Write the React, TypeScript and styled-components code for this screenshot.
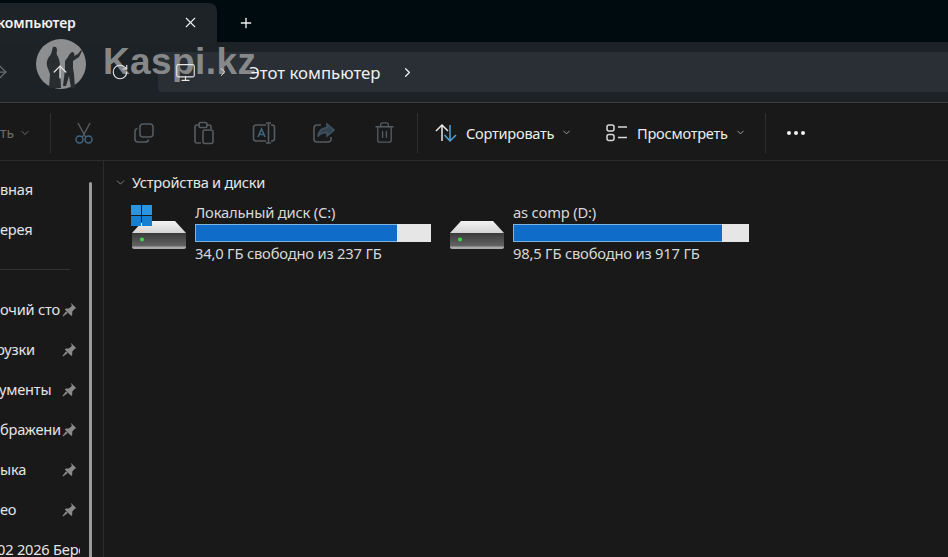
import React from 'react';
import styled, { createGlobalStyle } from 'styled-components';
import {
  ArrowRight,
  ArrowUp,
  ChevronDown,
  ChevronRight,
  Monitor,
  Plus,
  RotateCw,
  Trash2,
  X,
} from 'lucide-react';

const GlobalStyle = createGlobalStyle`
  html, body {
    margin: 0;
    padding: 0;
    background: #191919;
  }
  body {
    font-family: 'Noto Sans', 'Open Sans', sans-serif;
    color: #e8e8e8;
  }
`;

const Window = styled.div`
  position: relative;
  width: 948px;
  height: 557px;
  overflow: hidden;
  background: #191919;
`;

const TabBar = styled.div`
  height: 42px;
  display: flex;
  align-items: flex-end;
  background: #000b10;
`;

const Tab = styled.div`
  width: 217px;
  height: 39px;
  box-sizing: border-box;
  padding: 0 18px 0 0;
  display: flex;
  align-items: center;
  justify-content: space-between;
  background: #1e2327;
  border-top-right-radius: 8px;
  color: #f2f2f2;
  font-size: 14px;
  font-weight: 600;
`;

const TabTitle = styled.span`
  margin-left: -3px;
  letter-spacing: -0.1px;
`;

const NewTab = styled.div`
  margin-left: 21px;
  height: 39px;
  display: flex;
  align-items: center;
  color: #f0f0f0;
`;

const AddressRow = styled.div`
  height: 61px;
  box-sizing: border-box;
  padding: 10px 0;
  display: flex;
  align-items: stretch;
  background: #1d2226;
  border-bottom: 1px solid #3a3e42;
`;

const NavButtons = styled.div`
  width: 158px;
  flex: none;
  display: flex;
  align-items: center;
  gap: 36px;
  margin-left: -12px;
  margin-right: 12px;
  box-sizing: border-box;
`;

const NavIcon = styled.span<{ $dim?: boolean }>`
  position: relative;
  z-index: 2;
  width: 24px;
  height: 24px;
  display: flex;
  align-items: center;
  justify-content: center;
  color: ${(p) => (p.$dim ? '#6a6e72' : '#e6e6e6')};
`;

const AddressBar = styled.div`
  flex: 1;
  display: flex;
  align-items: center;
  padding-left: 15px;
  background: #2a2f35;
  border-radius: 4px 0 0 4px;
  color: #f0f0f0;
`;

const Crumb = styled.span`
  position: relative;
  z-index: 2;
  display: flex;
  align-items: center;
  font-size: 16.8px;
`;

const CrumbArrow = styled.span<{ $gap: number }>`
  position: relative;
  z-index: 2;
  display: flex;
  align-items: center;
  margin: 0 ${(p) => p.$gap}px;
`;

const Toolbar = styled.div`
  height: 58px;
  box-sizing: border-box;
  padding-top: 2px;
  display: flex;
  align-items: center;
  background: #191919;
  border-bottom: 1px solid #2c2c2c;
`;

const ClippedNew = styled.span`
  width: 50px;
  flex: none;
  display: flex;
  align-items: center;
  gap: 5px;
  color: #6c6c6c;
  font-size: 14px;
`;

const Separator = styled.span`
  width: 1px;
  height: 40px;
  flex: none;
  background: #2f2f2f;
`;

const ToolGroup = styled.div`
  display: flex;
  padding-left: 3px;
  width: 366px;
  flex: none;
  box-sizing: border-box;
`;

const ToolIcon = styled.span`
  width: 60px;
  height: 24px;
  flex: none;
  display: flex;
  align-items: center;
  justify-content: center;
  color: #565b5f;
`;

const ToolButton = styled.div<{ $width: number; $pad: number }>`
  width: ${(p) => p.$width}px;
  flex: none;
  box-sizing: border-box;
  padding-left: ${(p) => p.$pad}px;
  display: flex;
  align-items: center;
  color: #ececec;
  font-size: 14.6px;
  letter-spacing: -0.25px;
`;

const ToolLabel = styled.span`
  margin: 0 7px 0 9px;
`;

const Dots = styled.div`
  margin-left: 21px;
  display: flex;
  gap: 3px;
`;

const Dot = styled.span`
  width: 4px;
  height: 4px;
  border-radius: 50%;
  background: #f2f2f2;
`;

const Body = styled.div`
  display: flex;
  height: 396px;
`;

const Sidebar = styled.nav`
  position: relative;
  width: 104px;
  flex: none;
  box-sizing: border-box;
  padding-top: 8px;
  border-right: 1px solid #2a2a2a;
`;

const NavItem = styled.div`
  height: 40px;
  width: 77px;
  display: flex;
  align-items: center;
  justify-content: space-between;
  font-size: 14.6px;
  color: #e4e4e4;
  letter-spacing: -0.2px;
`;

const NavText = styled.span<{ $width: number; $indent?: number }>`
  width: ${(p) => p.$width}px;
  flex: none;
  overflow: hidden;
  white-space: nowrap;
  text-indent: ${(p) => p.$indent ?? 0}px;
`;

const NavDivider = styled.div`
  height: 40px;
  width: 70px;
  display: flex;
  align-items: center;
  &::after {
    content: '';
    width: 100%;
    height: 1px;
    background: #333;
  }
`;

const Scrollbar = styled.span`
  position: absolute;
  left: 89px;
  top: 21px;
  bottom: 0;
  width: 3px;
  border-radius: 2px 2px 0 0;
  background: #9a9a9a;
`;

const Content = styled.main`
  flex: 1;
  padding: 11px 0 0 10px;
`;

const GroupHeader = styled.div`
  height: 20px;
  display: flex;
  align-items: center;
  gap: 5px;
  font-size: 14.6px;
  letter-spacing: -0.25px;
  color: #e6e6e6;
`;

const Drives = styled.div`
  margin-top: 13px;
  margin-left: 18px;
  display: flex;
  gap: 19px;
`;

const Drive = styled.div`
  width: 299px;
  display: flex;
  gap: 9px;
`;

const DriveIconBox = styled.div`
  position: relative;
  width: 54px;
  height: 46px;
  flex: none;
`;

const WinLogo = styled.svg`
  position: absolute;
  left: -1px;
  top: 0;
`;

const DriveInfo = styled.div`
  width: 236px;
  font-size: 14.75px;
  letter-spacing: -0.2px;
  color: #d8d8d8;
`;

const DriveLine = styled.div`
  height: 16px;
  line-height: 14px;
  white-space: nowrap;
`;

const UsageBar = styled.div`
  height: 18px;
  margin: 3px 0 4px;
  box-sizing: border-box;
  background: #e6e6e6;
`;

const UsageFill = styled.div`
  height: 100%;
  box-sizing: border-box;
  background: #0f6cc8;
  border: 1px solid #7fb4e0;
  border-right: none;
`;

const Watermark = styled.div`
  position: absolute;
  left: 36px;
  top: 39px;
  z-index: 1;
  display: flex;
  align-items: center;
  gap: 17px;
  pointer-events: none;
`;

const WatermarkText = styled.span`
  font-family: 'Liberation Sans', Arial, sans-serif;
  font-size: 37px;
  font-weight: 700;
  line-height: 50px;
  margin-top: -4px;
  color: #8b8d8f;
  opacity: 0.95;
  letter-spacing: 0.4px;
`;

const DriveIcon = ({ id }: { id: string }) => (
  <svg width="54" height="46" viewBox="0 0 54 46">
    <defs>
      <linearGradient id={`top-${id}`} x1="0" y1="0" x2="0" y2="1">
        <stop offset="0" stopColor="#f2f2f2" />
        <stop offset="1" stopColor="#d4d4d4" />
      </linearGradient>
      <linearGradient id={`front-${id}`} x1="0" y1="0" x2="0" y2="1">
        <stop offset="0" stopColor="#3a3a3a" />
        <stop offset="1" stopColor="#6a6a6a" />
      </linearGradient>
    </defs>
    <path d="M11 16h32l11 12H0z" fill={`url(#top-${id})`} />
    <path
      d="M0 28h54v13a2 2 0 0 1-2 2H2a2 2 0 0 1-2-2z"
      fill={`url(#front-${id})`}
    />
    <path d="M0 41.5h54V42a2 2 0 0 1-2 2H2a2 2 0 0 1-2-2z" fill="#a9a9a9" />
    <circle cx="10" cy="34.5" r="2" fill="#3fd84a" />
  </svg>
);

// blades point up, handles at the bottom, like the Explorer cut icon
const CutIcon = () => (
  <svg width="20" height="22" viewBox="0 0 20 22" fill="none" stroke="#3f6580" strokeWidth="1.5">
    <path d="M4 1l7.500 14M16 1L8.500 15" stroke="#565b5f" />
    <circle cx="5.500" cy="17.500" r="3.500" />
    <circle cx="14.500" cy="17.500" r="3.500" />
  </svg>
);

const CopyIcon = () => (
  <svg width="22" height="22" viewBox="0 0 22 22" fill="none" stroke="currentColor" strokeWidth="1.6">
    <rect x="7" y="2" width="13" height="13" rx="3" />
    <path d="M4.5 6.5A3 3 0 0 0 2 9.5V17a3 3 0 0 0 3 3h7.5a3 3 0 0 0 3-2.5" />
  </svg>
);

const PasteIcon = () => (
  <svg width="22" height="24" viewBox="0 0 22 24" fill="none" stroke="currentColor" strokeWidth="1.6">
    <path d="M7 4H4a2 2 0 0 0-2 2v14a2 2 0 0 0 2 2h4" />
    <path d="M13 4h3a2 2 0 0 1 2 2v2" />
    <rect x="6" y="1.5" width="8" height="5" rx="1.5" />
    <rect x="10" y="9" width="10" height="13.5" rx="2" />
  </svg>
);

const RenameIcon = () => (
  <svg width="24" height="22" viewBox="0 0 24 22" fill="none" stroke="currentColor" strokeWidth="1.6">
    <path d="M14 3H4a2.5 2.5 0 0 0-2.5 2.5v11A2.5 2.5 0 0 0 4 19h10" />
    <path d="M19 3h1a2.5 2.5 0 0 1 2.5 2.5v11A2.5 2.5 0 0 1 20 19h-1" />
    <path d="M14 1h5M14 21h5M16.500 1v20" />
    <path d="M6 15l3.500-8 3.500 8M7.200 12.500h4.600" stroke="#3f6580" />
  </svg>
);

const ShareIcon = () => (
  <svg width="24" height="22" viewBox="0 0 24 22" fill="none" stroke="currentColor" strokeWidth="1.6">
    <path d="M9 3H5a3 3 0 0 0-3 3v11a3 3 0 0 0 3 3h11a3 3 0 0 0 3-3v-2" />
    <path d="M15 2l7 6-7 6v-3.500c-4 0-7 1-9 4 .5-5 4-8.500 9-9z" fill="#34424e" stroke="#3f5362" />
  </svg>
);

const SortIcon = () => (
  <svg width="22" height="20" viewBox="0 0 22 20" fill="none" strokeWidth="1.5">
    <path d="M7 18V2M1 8l6-6 6 6" stroke="#e8e8e8" />
    <path d="M15 2v16M9.500 12l5.500 6 6-6" stroke="#4ca3d8" />
  </svg>
);

const ViewIcon = () => (
  <svg width="22" height="18" viewBox="0 0 22 18" fill="none" stroke="#d8d8d8" strokeWidth="1.5">
    <rect x="1" y="1" width="7" height="6" rx="2" />
    <rect x="1" y="10.500" width="7" height="6" rx="2" />
    <path d="M12 3h9M12 13.500h9" />
  </svg>
);

const PinIcon = () => (
  <svg width="15" height="15" viewBox="0 0 14 14" fill="#8a8a8a">
    <path d="M8.200 0.600l5.200 5.200-1.500.6-2.400 2.800.1 2.800-1 1-6-6 1-1 2.800.1 2.800-2.400z" />
    <path d="M3.800 8.600l1.600 1.600-4.400 3.400-.6-.6z" />
  </svg>
);

const SilhouetteLogo = () => (
  <svg width="50" height="50" viewBox="0 0 50 50">
    <circle cx="25" cy="25" r="25" fill="#8c8e8f" />
    <path
      d="M17 8c2-1 4 0 4 3 0 2-1 3 0 5 2 3 3 7 3 11l1 22h-12l1-14-3-8c-1-6 2-9 4-12 1-2 1-5 2-7z"
      fill="#2a2d30"
    />
    <path
      d="M36 13c2 0 3 2 2 4l4-2 3-4 1 1-3 6-6 4v7l1 6 1 14h-4l-2-12-3 10h-3l2-16 0-9 3-4c1-2 2-4 4-5z"
      fill="#2a2d30"
    />
  </svg>
);

const navItems = [
  { text: 'очий сто', indent: 0 },
  { text: 'рузки', indent: -4 },
  { text: 'ументы', indent: -1 },
  { text: 'бражени', indent: 0 },
  { text: 'ыка', indent: 0 },
  { text: 'ео', indent: 0 },
];

const App = () => {
  return (
    <Window>
      <GlobalStyle />
      <TabBar>
        <Tab>
          <TabTitle>компьютер</TabTitle>
          <X size={17} strokeWidth={1.5} />
        </Tab>
        <NewTab>
          <Plus size={16} strokeWidth={2} />
        </NewTab>
      </TabBar>

      <AddressRow>
        <NavButtons>
          <NavIcon $dim>
            <ArrowRight size={20} strokeWidth={1.5} />
          </NavIcon>
          <NavIcon>
            <ArrowUp size={20} strokeWidth={1.5} />
          </NavIcon>
          <NavIcon>
            <RotateCw size={18} strokeWidth={1.5} />
          </NavIcon>
        </NavButtons>
        <AddressBar>
          <NavIcon>
            <Monitor size={21} strokeWidth={1.3} />
          </NavIcon>
          <CrumbArrow $gap={19}>
            <ChevronRight size={14} strokeWidth={1.6} />
          </CrumbArrow>
          <Crumb>Этот компьютер</Crumb>
          <CrumbArrow $gap={19}>
            <ChevronRight size={15} strokeWidth={2} />
          </CrumbArrow>
        </AddressBar>
      </AddressRow>

      <Watermark>
        <SilhouetteLogo />
        <WatermarkText>Kaspi.kz</WatermarkText>
      </Watermark>

      <Toolbar>
        <ClippedNew>
          ть
          <ChevronDown size={12} strokeWidth={2} />
        </ClippedNew>
        <Separator />
        <ToolGroup>
          <ToolIcon>
            <CutIcon />
          </ToolIcon>
          <ToolIcon>
            <CopyIcon />
          </ToolIcon>
          <ToolIcon>
            <PasteIcon />
          </ToolIcon>
          <ToolIcon>
            <RenameIcon />
          </ToolIcon>
          <ToolIcon>
            <ShareIcon />
          </ToolIcon>
          <ToolIcon>
            <Trash2 size={23} strokeWidth={1.4} />
          </ToolIcon>
        </ToolGroup>
        <Separator />
        <ToolButton $width={170} $pad={17}>
          <SortIcon />
          <ToolLabel>Сортировать</ToolLabel>
          <ChevronDown size={11} strokeWidth={2} color="#aaa" />
        </ToolButton>
        <ToolButton $width={177} $pad={18}>
          <ViewIcon />
          <ToolLabel>Просмотреть</ToolLabel>
          <ChevronDown size={11} strokeWidth={2} color="#aaa" />
        </ToolButton>
        <Separator />
        <Dots>
          <Dot />
          <Dot />
          <Dot />
        </Dots>
      </Toolbar>

      <Body>
        <Sidebar>
          <NavItem>
            <NavText $width={77}>вная</NavText>
          </NavItem>
          <NavItem>
            <NavText $width={77}>ерея</NavText>
          </NavItem>
          <NavDivider />
          {navItems.map((item) => (
            <NavItem key={item.text}>
              <NavText $width={61} $indent={item.indent}>
                {item.text}
              </NavText>
              <PinIcon />
            </NavItem>
          ))}
          <NavItem>
            <NavText $width={80} $indent={-3}>
              02 2026 Бере
            </NavText>
          </NavItem>
          <Scrollbar />
        </Sidebar>
        <Content>
          <GroupHeader>
            <ChevronDown size={13} strokeWidth={1.3} color="#aaa" />
            Устройства и диски
          </GroupHeader>
          <Drives>
            <Drive>
              <DriveIconBox>
                <DriveIcon id="c" />
                <WinLogo width="21" height="21" viewBox="0 0 21 21">
                  <rect width="10" height="10" fill="#2a96e2" />
                  <rect x="11" width="10" height="10" fill="#2a96e2" />
                  <rect y="11" width="10" height="10" fill="#1680d0" />
                  <rect x="11" y="11" width="10" height="10" fill="#1680d0" />
                </WinLogo>
              </DriveIconBox>
              <DriveInfo>
                <DriveLine>Локальный диск (C:)</DriveLine>
                <UsageBar>
                  <UsageFill style={{ width: `${(202 / 236) * 100}%` }} />
                </UsageBar>
                <DriveLine>34,0 ГБ свободно из 237 ГБ</DriveLine>
              </DriveInfo>
            </Drive>
            <Drive>
              <DriveIconBox>
                <DriveIcon id="d" />
              </DriveIconBox>
              <DriveInfo>
                <DriveLine>as comp (D:)</DriveLine>
                <UsageBar>
                  <UsageFill style={{ width: `${(209 / 236) * 100}%` }} />
                </UsageBar>
                <DriveLine>98,5 ГБ свободно из 917 ГБ</DriveLine>
              </DriveInfo>
            </Drive>
          </Drives>
        </Content>
      </Body>
    </Window>
  );
};

export default App;
